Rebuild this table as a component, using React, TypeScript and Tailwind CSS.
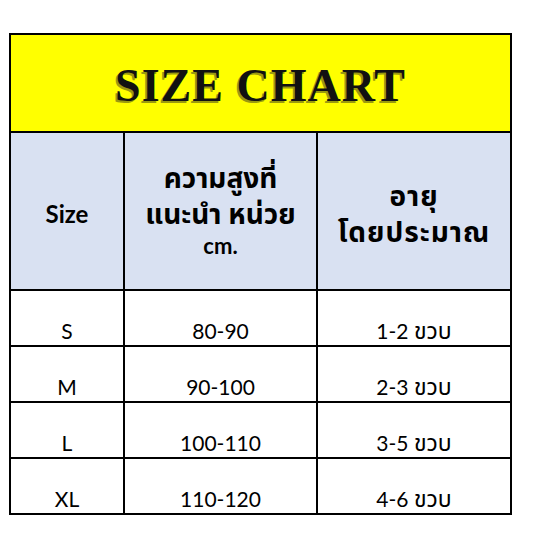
const rows = [
  { size: "S", height: "80-90", age: "1-2", unit: "ขวบ" },
  { size: "M", height: "90-100", age: "2-3", unit: "ขวบ" },
  { size: "L", height: "100-110", age: "3-5", unit: "ขวบ" },
  { size: "XL", height: "110-120", age: "4-6", unit: "ขวบ" },
];

const body = "font-['Lato','Noto_Sans','Noto_Sans_Thai',sans-serif]";
const cell = "h-[54px] bg-white flex items-end justify-center text-[21px] leading-[28px]";

export default function App() {
  return (
    <div className="w-[537px] h-[537px] bg-white pt-[33px] pl-[9px]">
      <div className={`w-[503px] border-2 border-black bg-black text-black ${body}`}>
        <div className="grid grid-cols-[112px_191px_192px] gap-[2px]">
          <div className="col-span-3 h-[96px] bg-[#ffff00] flex items-center justify-center">
            <span className="font-['Liberation_Serif',serif] font-bold text-[46px] tracking-[1px] text-[#111] [text-shadow:-2px_2px_0_#9a9a10] pt-[4px]">
              SIZE CHART
            </span>
          </div>

          <div className="h-[156px] bg-[#d9e1f2] flex items-center justify-center font-bold text-[24px] pt-[6px]">
            Size
          </div>
          <div className="h-[156px] bg-[#d9e1f2] flex flex-col items-center justify-center font-bold text-center pb-[2px]">
            <span className="text-[28px] leading-[36px]">ความสูงที่</span>
            <span className="text-[28px] leading-[36px]">แนะนำ หน่วย</span>
            <span className="text-[22px] leading-[30px]">cm.</span>
          </div>
          <div className="h-[156px] bg-[#d9e1f2] flex flex-col items-center justify-center font-bold text-[28px] leading-[36px] tracking-[1px] text-center pt-[4px]">
            <span>อายุ</span>
            <span>โดยประมาณ</span>
          </div>

          {rows.map((r) => (
            <div key={r.size} className="contents">
              <div className={cell}>{r.size}</div>
              <div className={cell}>{r.height}</div>
              <div className={cell}>
                <span>
                  {r.age} <span className="text-[23px] leading-none">{r.unit}</span>
                </span>
              </div>
            </div>
          ))}
        </div>
      </div>
    </div>
  );
}
